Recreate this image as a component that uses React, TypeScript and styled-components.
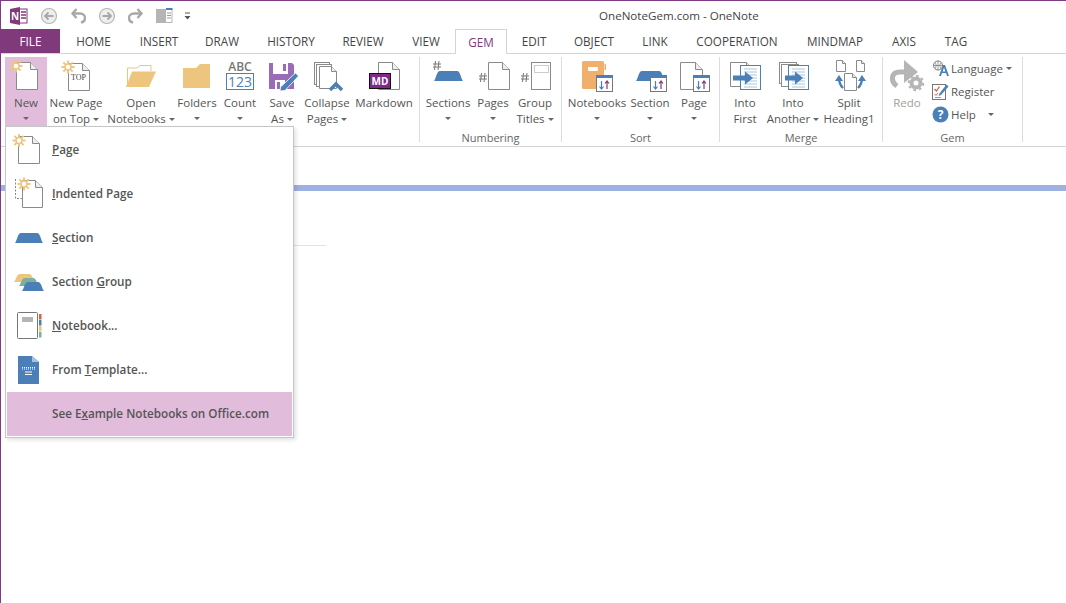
import React from 'react';
import styled, { createGlobalStyle } from 'styled-components';

const GlobalStyle = createGlobalStyle`
  html, body { margin: 0; padding: 0; background: #fff; }
  body { font-family: "Open Sans", "Liberation Sans", sans-serif; font-size: 11.5px; color: #555; }
`;

const BLUE = '#4a7fb8';
const ORANGE = '#eec57f';
const GREY = '#8a8a8a';

const Window = styled.div`
  position: relative;
  width: 1066px;
  height: 603px;
  box-sizing: border-box;
  border-top: 1px solid #7f3a85;
  border-left: 1px solid #7f3a85;
  overflow: hidden;
`;

const TitleBar = styled.div`
  display: flex;
  align-items: center;
  height: 28px;
`;

const QuickAccess = styled.div`
  display: flex;
  align-items: center;
  width: 598px;
  height: 27px;
  padding-top: 2px;
  box-sizing: border-box;
`;

const Title = styled.div`
  font-size: 11.6px;
  color: #444;
  white-space: nowrap;
`;

const Tabs = styled.div`
  display: flex;
  height: 25px;
  box-sizing: border-box;
  border-bottom: 1px solid #d4d4d4;
`;

const Tab = styled.div<{ $w: number; $file?: boolean; $active?: boolean }>`
  width: ${({ $w }) => $w}px;
  height: ${({ $active }) => ($active ? 25 : 24)}px;
  box-sizing: border-box;
  display: flex;
  align-items: center;
  justify-content: center;
  font-size: 11.7px;
  white-space: nowrap;
  color: ${({ $file, $active }) => ($file ? '#fff' : $active ? '#80397b' : '#444')};
  background: ${({ $file, $active }) => ($file ? '#80397b' : $active ? '#fff' : 'transparent')};
  ${({ $active }) => ($active ? 'border: 1px solid #d4d4d4; border-bottom: none;' : '')}
`;

const Ribbon = styled.div`
  display: flex;
  height: 93px;
  box-sizing: border-box;
  border-bottom: 1px solid #d4d4d4;
  padding: 3px 0 0 4px;
`;

const Group = styled.div<{ $w: number }>`
  width: ${({ $w }) => $w}px;
  height: 85px;
  box-sizing: border-box;
  border-right: 1px solid #dcdcdc;
  display: flex;
  flex-direction: column;
`;

const GroupRow = styled.div<{ $pad: number }>`
  display: flex;
  flex: none;
  height: 74px;
  padding-left: ${({ $pad }) => $pad}px;
`;

const GroupLabel = styled.div`
  flex: none;
  text-align: center;
  font-size: 11px;
  line-height: 14px;
  color: #666;
`;

const RibbonButton = styled.div<{ $w: number; $on?: boolean; $dim?: boolean }>`
  width: ${({ $w }) => $w}px;
  height: 69px;
  flex: none;
  display: flex;
  flex-direction: column;
  align-items: center;
  background: ${({ $on }) => ($on ? '#e1bddb' : 'transparent')};
  color: ${({ $dim }) => ($dim ? '#a0a0a0' : '#555')};
`;

const IconBox = styled.svg`
  width: 40px;
  height: 36px;
  flex: none;
  overflow: visible;
  margin-bottom: 2px;
`;

const Line = styled.div`
  height: 16px;
  line-height: 16px;
  white-space: nowrap;
  display: flex;
  align-items: center;
  justify-content: center;
`;

const Caret = styled.span<{ $gap?: number }>`
  display: inline-block;
  width: 0;
  height: 0;
  margin-left: ${({ $gap }) => $gap ?? 3}px;
  border-left: 3px solid transparent;
  border-right: 3px solid transparent;
  border-top: 3px solid #666;
`;

const SmallColumn = styled.div`
  margin-left: 6px;
  display: flex;
  flex-direction: column;
  gap: 3px;
  padding-top: 1px;
`;

const SmallItem = styled.div`
  display: flex;
  align-items: center;
  height: 20px;
  white-space: nowrap;
`;

const SmallIcon = styled.svg`
  width: 17px;
  height: 17px;
  margin-right: 2px;
  flex: none;
  overflow: visible;
`;

const Canvas = styled.div`
  height: 400px;
  padding-top: 38px;
  box-sizing: border-box;
`;

const Band = styled.div`
  height: 6px;
  background: #9fb0e3;
`;

const TitleRule = styled.div`
  width: 305px;
  height: 1px;
  margin: 54px 0 0 20px;
  background: #e3e3e3;
`;

const Menu = styled.div`
  position: absolute;
  left: 4px;
  top: 125px;
  width: 289px;
  height: 312px;
  box-sizing: border-box;
  background: #fff;
  border: 1px solid #c6c6c6;
  box-shadow: 2px 2px 4px rgba(0, 0, 0, 0.12);
  padding: 1px;
`;

const MenuItem = styled.div<{ $on?: boolean }>`
  display: flex;
  align-items: center;
  height: 44px;
  background: ${({ $on }) => ($on ? '#e1bddb' : 'transparent')};
  font-size: 11.7px;
  font-weight: 600;
  color: #555;
  white-space: nowrap;
`;

const MenuIcon = styled.svg`
  width: 45px;
  height: 36px;
  flex: none;
  overflow: visible;
`;

const MenuText = styled.span`
  padding-bottom: 2px;
`;

const doc = (x0: number, y0: number, x1: number, y1: number, fold = 7) =>
  `M${x0} ${y0}H${x1 - fold}L${x1} ${y0 + fold}V${y1}H${x0}Z`;

function Doc({ x0, y0, x1, y1, fold = 7, stroke = GREY }: { x0: number; y0: number; x1: number; y1: number; fold?: number; stroke?: string }) {
  return (
    <g fill="#fff" stroke={stroke} strokeWidth="1">
      <path d={doc(x0, y0, x1, y1, fold)} />
      <path d={`M${x1 - fold} ${y0}V${y0 + fold}H${x1}`} fill="#eee" />
    </g>
  );
}

function Sun({ cx, cy }: { cx: number; cy: number }) {
  const rays = [0, 45, 90, 135, 180, 225, 270, 315];
  return (
    <g stroke={ORANGE} strokeWidth="1.9" fill="#fff">
      {rays.map((a) => (
        <line
          key={a}
          x1={cx + 3 * Math.cos((a * Math.PI) / 180)}
          y1={cy + 3 * Math.sin((a * Math.PI) / 180)}
          x2={cx + 6.5 * Math.cos((a * Math.PI) / 180)}
          y2={cy + 6.5 * Math.sin((a * Math.PI) / 180)}
        />
      ))}
      <circle cx={cx} cy={cy} r="3" strokeWidth="1.5" />
    </g>
  );
}

function SectionTab({ x, y, w = 29, h = 10, fill = BLUE }: { x: number; y: number; w?: number; h?: number; fill?: string }) {
  return (
    <path
      d={`M${x} ${y + h}C${x + 2} ${y + h - 2} ${x + 2.5} ${y} ${x + 6} ${y}H${x + w - 6}C${x + w - 2.5} ${y} ${x + w - 2} ${y + h - 2} ${x + w} ${y + h}Z`}
      fill={fill}
    />
  );
}

function Hash({ x, y }: { x: number; y: number }) {
  return (
    <path
      d={`M${x + 2.5} ${y}L${x + 1.5} ${y + 9}M${x + 6} ${y}L${x + 5} ${y + 9}M${x} ${y + 3}H${x + 8}M${x} ${y + 6}H${x + 8}`}
      stroke="#777"
      strokeWidth="1"
      fill="none"
    />
  );
}

function SortBadge({ x, y }: { x: number; y: number }) {
  return (
    <g>
      <rect x={x + 0.5} y={y + 0.5} width="16" height="16" fill="#fff" stroke="#777" />
      <rect x={x} y={y} width="17" height="3" fill={BLUE} />
      <path d={`M${x + 5.5} ${y + 6}V${y + 14}M${x + 3.5} ${y + 11.5}L${x + 5.5} ${y + 14}L${x + 7.5} ${y + 11.5}`} stroke={BLUE} fill="none" strokeWidth="1.2" />
      <path d={`M${x + 11} ${y + 14}V${y + 6}M${x + 9} ${y + 8.5}L${x + 11} ${y + 6}L${x + 13} ${y + 8.5}`} stroke="#80397b" fill="none" strokeWidth="1.2" />
    </g>
  );
}

function DocLines({ x0, y0, x1, y1 }: { x0: number; y0: number; x1: number; y1: number }) {
  const rows = [];
  for (let y = y0 + 4; y < y1 - 1; y += 3) rows.push(y);
  return (
    <g>
      <rect x={x0 + 0.5} y={y0 + 0.5} width={x1 - x0} height={y1 - y0} fill="#fff" stroke={BLUE} />
      {rows.map((y) => (
        <line key={y} x1={x0 + 4} x2={x1 - 3} y1={y} y2={y} stroke="#a9c3de" />
      ))}
    </g>
  );
}

function BlueArrow({ x, y, w }: { x: number; y: number; w: number }) {
  return <path d={`M${x} ${y - 2.5}H${x + w - 8}V${y - 6.5}L${x + w} ${y}L${x + w - 8} ${y + 6.5}V${y + 2.5}H${x}Z`} fill={BLUE} />;
}

const ribbonIcons: Record<string, React.ReactNode> = {
  new: (
    <>
      <Doc x0={10.5} y0={5.5} x1={31.5} y1={32.5} />
      <Sun cx={10} cy={9} />
    </>
  ),
  newTop: (
    <>
      <Doc x0={12.5} y0={6.5} x1={33.5} y1={33.5} />
      <Sun cx={12} cy={10} />
      <text x="22.5" y="23" fontFamily="Liberation Serif, serif" fontSize="8" fill="#444" textAnchor="middle">TOP</text>
    </>
  ),
  open: (
    <>
      <path d="M6.5 29V11H16L19 8.5H30V14" fill="#fff" stroke={ORANGE} />
      <path d="M11 14.5H35L28 30H5Z" fill={ORANGE} />
    </>
  ),
  folders: <path d="M6 11H19L23 7H33V31H6Z" fill={ORANGE} />,
  count: (
    <>
      <text x="20" y="14" fontFamily="Open Sans, sans-serif" fontWeight="600" fontSize="12" fill="#777" textAnchor="middle">ABC</text>
      <rect x="6.5" y="16.5" width="27" height="16" fill="#fff" stroke={BLUE} />
      <text x="20" y="30" fontFamily="Open Sans, sans-serif" fontSize="14" fill={BLUE} textAnchor="middle">123</text>
    </>
  ),
  save: (
    <>
      <path d="M7 6H30L32 8V32H7Z" fill="#9a6bb8" />
      <rect x="11" y="6" width="15" height="11" fill="#fff" />
      <rect x="21" y="7" width="3" height="7" fill="#9a6bb8" />
      <rect x="13" y="23" width="10" height="9" fill="#fff" />
      <rect x="15" y="25" width="3" height="7" fill="#9a6bb8" />
      <path d="M33.5 16L36.5 19L23 33.5L18 34L18.5 30Z" fill={BLUE} stroke="#fff" strokeWidth="0.8" />
    </>
  ),
  collapse: (
    <>
      <rect x="7.5" y="5.5" width="15" height="22" fill="#fff" stroke={GREY} />
      <rect x="9.5" y="7.5" width="15" height="22" fill="#fff" stroke={GREY} />
      <Doc x0={12.5} y0={9.5} x1={29.5} y1={31.5} fold={5} />
      <path d="M23 33L29 27L35 33" fill="none" stroke={BLUE} strokeWidth="3.4" />
    </>
  ),
  markdown: (
    <>
      <Doc x0={14.5} y0={5.5} x1={35.5} y1={32.5} />
      <rect x="5.5" y="16.5" width="21" height="15" fill="#80298b" stroke="#111" />
      <text x="16" y="28" fontFamily="Open Sans, sans-serif" fontWeight="700" fontSize="10" fill="#fff" textAnchor="middle">MD</text>
    </>
  ),
  sections: (
    <>
      <Hash x={5} y={4} />
      <SectionTab x={6} y={14} />
    </>
  ),
  pages: (
    <>
      <Hash x={6} y={16} />
      <Doc x0={15.5} y0={5.5} x1={36.5} y1={32.5} />
    </>
  ),
  groupTitles: (
    <>
      <Hash x={6} y={16} />
      <rect x="16.5" y="5.5" width="19" height="27" fill="#fff" stroke={GREY} />
      <rect x="19.5" y="8.5" width="14" height="7" fill="none" stroke="#999" strokeDasharray="1 1" />
    </>
  ),
  sortNotebooks: (
    <>
      <rect x="5" y="4" width="22" height="28" rx="1.5" fill="#f0b06b" />
      <rect x="11" y="10" width="10" height="4" rx="1" fill="#fff" />
      <rect x="27.5" y="7" width="1.5" height="6" fill="#f0b06b" />
      <SortBadge x={19} y={18} />
    </>
  ),
  sortSection: (
    <>
      <SectionTab x={6} y={14} />
      <SortBadge x={20} y={18} />
    </>
  ),
  sortPage: (
    <>
      <Doc x0={6.5} y0={5.5} x1={28.5} y1={32.5} />
      <SortBadge x={19} y={18} />
    </>
  ),
  intoFirst: (
    <>
      <Doc x0={5.5} y0={5.5} x1={25.5} y1={29.5} fold={4} />
      <DocLines x0={15} y0={8} x1={35} y1={32} />
      <BlueArrow x={8} y={21} w={20} />
    </>
  ),
  intoAnother: (
    <>
      <rect x="6.5" y="5.5" width="17" height="21" fill="#fff" stroke={GREY} />
      <rect x="8.5" y="7.5" width="17" height="22" fill="#fff" stroke={GREY} />
      <DocLines x0={15} y0={8} x1={35} y1={32} />
      <BlueArrow x={12} y={21} w={18} />
    </>
  ),
  split: (
    <>
      <Doc x0={7.5} y0={3.5} x1={16.5} y1={14.5} fold={3} />
      <Doc x0={27.5} y0={3.5} x1={35.5} y1={14.5} fold={3} />
      <Doc x0={15.5} y0={16.5} x1={27.5} y1={33.5} fold={4} />
      <path d="M14 31C11 28 10 26 10 21" fill="none" stroke={BLUE} strokeWidth="2.4" />
      <path d="M6 24L10 18L14 24Z" fill={BLUE} />
      <path d="M29 31C32 28 33 26 33 21" fill="none" stroke={BLUE} strokeWidth="2.4" />
      <path d="M29 24L33 18L37 24Z" fill={BLUE} />
    </>
  ),
  redo: (
    <>
      <path d="M10 29C3 24 4 15 13 15H20" fill="none" stroke="#b5b5b5" strokeWidth="5" />
      <path d="M17 3L31 15L17 26Z" fill="#b5b5b5" />
      <circle cx="29" cy="26" r="4.5" fill="none" stroke="#b5b5b5" strokeWidth="4" />
      <circle cx="29" cy="26" r="7.3" fill="none" stroke="#b5b5b5" strokeWidth="2" strokeDasharray="2.6 3.1" />
    </>
  ),
};

interface ButtonDef {
  icon: string;
  w: number;
  lines: string[];
  caret?: boolean;
  on?: boolean;
}

interface GroupDef {
  w: number;
  pad: number;
  label?: string;
  buttons: ButtonDef[];
}

const groups: GroupDef[] = [
  {
    w: 415,
    pad: 0,
    buttons: [
      { icon: 'new', w: 42, lines: ['New'], caret: true, on: true },
      { icon: 'newTop', w: 58, lines: ['New Page', 'on Top'], caret: true },
      { icon: 'open', w: 72, lines: ['Open', 'Notebooks'], caret: true },
      { icon: 'folders', w: 40, lines: ['Folders'], caret: true },
      { icon: 'count', w: 46, lines: ['Count'], caret: true },
      { icon: 'save', w: 38, lines: ['Save', 'As'], caret: true },
      { icon: 'collapse', w: 52, lines: ['Collapse', 'Pages'], caret: true },
      { icon: 'markdown', w: 62, lines: ['Markdown'] },
    ],
  },
  {
    w: 142,
    pad: 6,
    label: 'Numbering',
    buttons: [
      { icon: 'sections', w: 44, lines: ['Sections'], caret: true },
      { icon: 'pages', w: 46, lines: ['Pages'], caret: true },
      { icon: 'groupTitles', w: 38, lines: ['Group', 'Titles'], caret: true },
    ],
  },
  {
    w: 158,
    pad: 5,
    label: 'Sort',
    buttons: [
      { icon: 'sortNotebooks', w: 60, lines: ['Notebooks'], caret: true },
      { icon: 'sortSection', w: 46, lines: ['Section'], caret: true },
      { icon: 'sortPage', w: 42, lines: ['Page'], caret: true },
    ],
  },
  {
    w: 163,
    pad: 5,
    label: 'Merge',
    buttons: [
      { icon: 'intoFirst', w: 40, lines: ['Into', 'First'] },
      { icon: 'intoAnother', w: 56, lines: ['Into', 'Another'], caret: true },
      { icon: 'split', w: 56, lines: ['Split', 'Heading1'] },
    ],
  },
];

const tabs: [string, number][] = [
  ['HOME', 67], ['INSERT', 64], ['DRAW', 62], ['HISTORY', 76], ['REVIEW', 68], ['VIEW', 58],
  ['GEM', 52], ['EDIT', 54], ['OBJECT', 66], ['LINK', 56], ['COOPERATION', 108], ['MINDMAP', 88], ['AXIS', 50], ['TAG', 54],
];

function ButtonLines({ def }: { def: ButtonDef }) {
  const two = def.lines.length === 2;
  return (
    <>
      <Line>{def.lines[0]}</Line>
      {two ? (
        <Line>
          {def.lines[1]}
          {def.caret && <Caret />}
        </Line>
      ) : (
        <Line>{def.caret && <Caret $gap={0} />}</Line>
      )}
    </>
  );
}

const QatIcon = styled.svg<{ $w: number; $ml: number }>`
  width: ${({ $w }) => $w}px;
  height: 18px;
  margin-left: ${({ $ml }) => $ml}px;
  flex: none;
`;

function CircleArrow({ flip, ml }: { flip?: boolean; ml: number }) {
  return (
    <QatIcon $w={18} $ml={ml} viewBox="0 0 18 18">
      <circle cx="9" cy="9" r="7.5" fill="#eee" stroke="#b5b5b5" strokeWidth="1.2" />
      <path d={flip ? 'M4.5 9H12.5M9.5 5.5L13 9L9.5 12.5' : 'M13.5 9H5.5M8.5 5.5L5 9L8.5 12.5'} fill="none" stroke="#a8a8a8" strokeWidth="1.8" />
    </QatIcon>
  );
}

function TurnArrow({ flip, ml }: { flip?: boolean; ml: number }) {
  return (
    <QatIcon $w={16} $ml={ml} viewBox="0 0 16 18">
      <g transform={flip ? 'translate(16 0) scale(-1 1)' : undefined} fill="none" stroke="#a8a8a8" strokeWidth="2.4">
        <path d="M2.5 6.5H10C13.5 6.5 15 9 15 11C15 13.5 13 15 11 15.5" />
        <path d="M6.5 2L2.5 6.5L6.5 11" />
      </g>
    </QatIcon>
  );
}

export default function App() {
  return (
    <>
      <GlobalStyle />
      <Window>
        <TitleBar>
          <QuickAccess>
            <QatIcon $w={18} $ml={9} viewBox="0 0 18 18">
              <rect x="8" y="2" width="9" height="14" fill="#fff" stroke="#80397b" />
              <path d="M11 5H16M11 8H16M11 11H16" stroke="#80397b" strokeWidth="1.5" />
              <path d="M0 2L10 0V18L0 16Z" fill="#80397b" />
              <text x="5" y="12.5" fontFamily="Open Sans, sans-serif" fontWeight="700" fontSize="10" fill="#fff" textAnchor="middle">N</text>
            </QatIcon>
            <CircleArrow ml={12} />
            <TurnArrow ml={12} />
            <CircleArrow flip ml={12} />
            <TurnArrow flip ml={12} />
            <QatIcon $w={17} $ml={12} viewBox="0 0 17 18">
              <rect x="0" y="2" width="9" height="14" fill="#b5b5b5" />
              <rect x="9.5" y="2.5" width="6.5" height="13" fill="#fff" stroke="#b5b5b5" />
              <rect x="10" y="1" width="6.5" height="2" fill={BLUE} />
              <path d="M11 6H15M11 8.5H15M11 11H15" stroke="#999" />
            </QatIcon>
            <QatIcon $w={7} $ml={11} viewBox="0 0 7 18">
              <path d="M1 6H6" stroke="#555" />
              <path d="M0.5 9H6.5L3.5 12.5Z" fill="#555" />
            </QatIcon>
          </QuickAccess>
          <Title>OneNoteGem.com - OneNote</Title>
        </TitleBar>
        <Tabs>
          <Tab $w={59} $file>FILE</Tab>
          {tabs.map(([name, w]) => (
            <Tab key={name} $w={w} $active={name === 'GEM'}>{name}</Tab>
          ))}
        </Tabs>
        <Ribbon>
          {groups.map((g) => (
            <Group key={g.buttons[0].icon} $w={g.w}>
              <GroupRow $pad={g.pad}>
                {g.buttons.map((b) => (
                  <RibbonButton key={b.icon} $w={b.w} $on={b.on}>
                    <IconBox viewBox="0 0 40 36">{ribbonIcons[b.icon]}</IconBox>
                    <ButtonLines def={b} />
                  </RibbonButton>
                ))}
              </GroupRow>
              <GroupLabel>{g.label}</GroupLabel>
            </Group>
          ))}
          <Group $w={140}>
            <GroupRow $pad={5}>
              <RibbonButton $w={38} $dim>
                <IconBox viewBox="0 0 40 36">{ribbonIcons.redo}</IconBox>
                <Line>Redo</Line>
              </RibbonButton>
              <SmallColumn>
                <SmallItem>
                  <SmallIcon viewBox="0 0 17 17">
                    <circle cx="6" cy="5.5" r="4.5" fill="none" stroke="#777" />
                    <path d="M1.5 5.5H10.5M6 1V10M3 2.5C4.5 4 4.5 7 3 8.5M9 2.5C7.5 4 7.5 7 9 8.5" fill="none" stroke="#777" strokeWidth="0.7" />
                    <path d="M7 16L11 5H13L17 16H15L14 13H10L9 16ZM10.7 11.5H13.3L12 7.5Z" fill={BLUE} />
                  </SmallIcon>
                  Language<Caret />
                </SmallItem>
                <SmallItem>
                  <SmallIcon viewBox="0 0 17 17">
                    <rect x="0.5" y="1.5" width="13" height="15" fill="#fff" stroke="#777" />
                    <path d="M2.5 6L4.5 8L7.5 3.5" fill="none" stroke="#d9603b" strokeWidth="1.3" />
                    <path d="M2.5 11L4 12.5L6 10" fill="none" stroke="#d9603b" strokeWidth="1" />
                    <path d="M3 14.5H9" stroke="#999" />
                    <path d="M14.5 1.5L16.5 3.5L9 12L6.5 13L7.5 10.5Z" fill={BLUE} />
                  </SmallIcon>
                  Register
                </SmallItem>
                <SmallItem>
                  <SmallIcon viewBox="0 0 17 17">
                    <circle cx="8.5" cy="8.5" r="8" fill={BLUE} />
                    <text x="8.5" y="13" fontFamily="Open Sans, sans-serif" fontWeight="700" fontSize="12" fill="#fff" textAnchor="middle">?</text>
                  </SmallIcon>
                  Help<Caret $gap={12} />
                </SmallItem>
              </SmallColumn>
            </GroupRow>
            <GroupLabel>Gem</GroupLabel>
          </Group>
        </Ribbon>
        <Canvas>
          <Band />
          <TitleRule />
        </Canvas>
        <Menu>
          <MenuItem>
            <MenuIcon viewBox="0 0 45 36">
              <Doc x0={11.5} y0={4.5} x1={32.5} y1={31.5} />
              <Sun cx={12} cy={8.5} />
            </MenuIcon>
            <MenuText><u>P</u>age</MenuText>
          </MenuItem>
          <MenuItem>
            <MenuIcon viewBox="0 0 45 36">
              <path d="M8.5 3V22.5H15" fill="none" stroke="#888" strokeDasharray="2 1.5" />
              <Doc x0={15.5} y0={4.5} x1={35.5} y1={31.5} />
              <Sun cx={17} cy={8} />
            </MenuIcon>
            <MenuText><u>I</u>ndented Page</MenuText>
          </MenuItem>
          <MenuItem>
            <MenuIcon viewBox="0 0 45 36">
              <SectionTab x={8} y={13} w={28} h={10} />
            </MenuIcon>
            <MenuText><u>S</u>ection</MenuText>
          </MenuItem>
          <MenuItem>
            <MenuIcon viewBox="0 0 45 36">
              <SectionTab x={7} y={10} w={21} h={8} fill={ORANGE} />
              <SectionTab x={12} y={14} w={20} h={8} fill="#7fae9d" />
              <SectionTab x={15} y={18} w={22} h={9} />
            </MenuIcon>
            <MenuText>Section <u>G</u>roup</MenuText>
          </MenuItem>
          <MenuItem>
            <MenuIcon viewBox="0 0 45 36">
              <rect x="10.5" y="4.5" width="20" height="26" rx="1" fill="#fff" stroke="#777" />
              <rect x="15" y="9" width="11" height="5" fill="#b5b5b5" />
              <rect x="32" y="6" width="2.5" height="5.5" fill="#d9603b" />
              <rect x="32" y="12" width="2.5" height="5.5" fill={BLUE} />
              <rect x="32" y="18" width="2.5" height="5.5" fill={ORANGE} />
              <rect x="32" y="24" width="2.5" height="5.5" fill="#7fae9d" />
            </MenuIcon>
            <MenuText><u>N</u>otebook...</MenuText>
          </MenuItem>
          <MenuItem>
            <MenuIcon viewBox="0 0 45 36">
              <path d="M11 4H25L32 10V32H11Z" fill={BLUE} />
              <path d="M25 4V10H32Z" fill="#a9c3de" />
              <path d="M15 15.5H28M15 17H28" stroke="#fff" strokeDasharray="1 1" />
              <path d="M18 20H25M18 22.5H25" stroke="#fff" />
            </MenuIcon>
            <MenuText>From <u>T</u>emplate...</MenuText>
          </MenuItem>
          <MenuItem $on>
            <MenuIcon viewBox="0 0 45 36" />
            <MenuText>See E<u>x</u>ample Notebooks on Office.com</MenuText>
          </MenuItem>
        </Menu>
      </Window>
    </>
  );
}
